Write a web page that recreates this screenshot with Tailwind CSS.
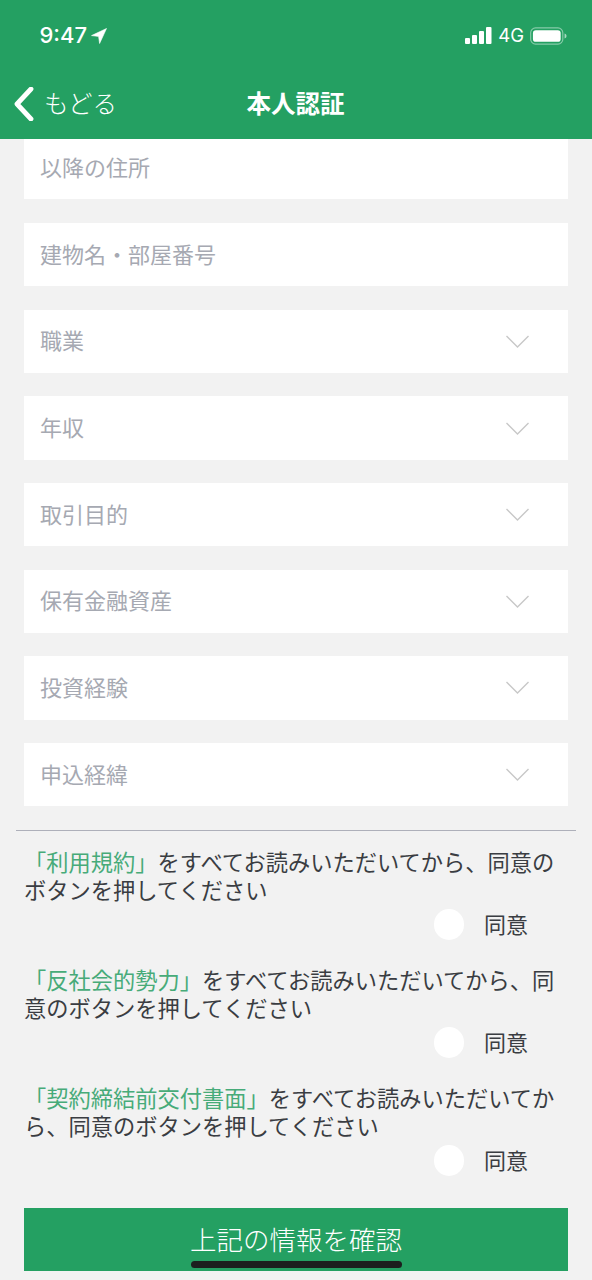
<!DOCTYPE html>
<html lang="ja">
<head>
<meta charset="utf-8">
<script src="https://cdn.jsdelivr.net/npm/@tailwindcss/browser@4"></script>
</head>
<body class="m-0">
<div class="relative w-[592px] h-[1280px] overflow-hidden bg-[#f2f2f2] font-['Noto_Sans_CJK_JP','Noto_Sans',sans-serif]">
  <header class="h-[139px] bg-[#24a062] flex flex-col text-white">
    <div class="h-[71px] flex items-start justify-between pt-[22px] pl-[39.5px] pr-[25px]">
      <div class="flex items-center gap-[4px] h-[27px]">
        <span class="font-['Inter',sans-serif] text-[22px] font-medium leading-[27px]">9:47</span>
        <svg width="16" height="16" viewBox="0 0 16 16"><path d="M15.5 0.5 L0.5 7.6 L7.6 8.4 L8.6 15.5 Z" fill="#fff" stroke="#fff" stroke-width="0.6" stroke-linejoin="round"/></svg>
      </div>
      <div class="flex items-center h-[27px]">
        <svg width="27" height="17" viewBox="0 0 27 17" fill="#fff"><rect x="0" y="11" width="5" height="6" rx="1"/><rect x="7" y="8" width="5" height="9" rx="1"/><rect x="14" y="4" width="5" height="13" rx="1"/><rect x="21" y="0" width="5.5" height="17" rx="1"/></svg>
        <span class="font-['Inter',sans-serif] text-[18.5px] leading-[27px] ml-[6px]">4G</span>
        <svg class="ml-[6px]" width="37" height="18" viewBox="0 0 38 18"><rect x="0.7" y="0.7" width="33" height="16.6" rx="5" fill="none" stroke="#fff" stroke-opacity="0.45" stroke-width="1.2"/><rect x="3" y="3" width="28.5" height="12" rx="3" fill="#fff"/><path d="M35.5 6.5 C37 7 37.5 8 37.5 9 C37.5 10 37 11 35.5 11.5 Z" fill="#fff" fill-opacity="0.6"/></svg>
      </div>
    </div>
    <div class="relative flex-1 flex items-center">
      <svg class="ml-[14px] mt-[-2px]" width="20" height="34" viewBox="0 0 20 34"><path d="M17 2 L3 17 L17 32" fill="none" stroke="#fff" stroke-width="4.8" stroke-linecap="round" stroke-linejoin="round"/></svg>
      <span class="ml-[10px] text-[24.5px] font-light leading-[34px] mt-[-4px]">もどる</span>
      <span class="absolute left-0 right-0 top-[13px] text-center text-[24.5px] font-bold leading-[38px] pr-[1px]">本人認証</span>
    </div>
  </header>

  <main class="px-[24px] flex flex-col gap-[23.35px] text-[22px] text-[#a6a9b2]">
    <div class="h-[60px] mb-[0.55px] bg-white flex items-center px-[16px] pb-[5px]">以降の住所</div>
    <div class="h-[63.55px] bg-white flex items-center px-[16px] pb-[3px]">建物名・部屋番号</div>
    <div class="h-[63.3px] bg-white flex items-center justify-between pl-[16px] pr-[39px]"><span class="mb-[3px]">職業</span><svg width="23" height="13" viewBox="0 0 23 13"><path d="M0.5 1 L11.5 12 L22.5 1" fill="none" stroke="#c8c8c8" stroke-width="1.4"/></svg></div>
    <div class="h-[63.3px] bg-white flex items-center justify-between pl-[16px] pr-[39px]"><span class="mb-[3px]">年収</span><svg width="23" height="13" viewBox="0 0 23 13"><path d="M0.5 1 L11.5 12 L22.5 1" fill="none" stroke="#c8c8c8" stroke-width="1.4"/></svg></div>
    <div class="h-[63.3px] bg-white flex items-center justify-between pl-[16px] pr-[39px]"><span class="mb-[3px]">取引目的</span><svg width="23" height="13" viewBox="0 0 23 13"><path d="M0.5 1 L11.5 12 L22.5 1" fill="none" stroke="#c8c8c8" stroke-width="1.4"/></svg></div>
    <div class="h-[63.3px] bg-white flex items-center justify-between pl-[16px] pr-[39px]"><span class="mb-[3px]">保有金融資産</span><svg width="23" height="13" viewBox="0 0 23 13"><path d="M0.5 1 L11.5 12 L22.5 1" fill="none" stroke="#c8c8c8" stroke-width="1.4"/></svg></div>
    <div class="h-[63.3px] bg-white flex items-center justify-between pl-[16px] pr-[39px]"><span class="mb-[3px]">投資経験</span><svg width="23" height="13" viewBox="0 0 23 13"><path d="M0.5 1 L11.5 12 L22.5 1" fill="none" stroke="#c8c8c8" stroke-width="1.4"/></svg></div>
    <div class="h-[63.3px] bg-white flex items-center justify-between pl-[16px] pr-[39px]"><span class="mb-[3px]">申込経緯</span><svg width="23" height="13" viewBox="0 0 23 13"><path d="M0.5 1 L11.5 12 L22.5 1" fill="none" stroke="#c8c8c8" stroke-width="1.4"/></svg></div>
  </main>

  <div class="mx-[16px] mt-[23.65px] h-px bg-[#aeb0ba]"></div>

  <section class="px-[24px] pt-[16px] text-[22.25px] leading-[28px] text-[#3a3d42]">
    <div class="h-[118px]">
      <p class="m-0"><span class="text-[#47ab79]">「利用規約」</span>をすべてお読みいただいてから、同意のボタンを押してください</p>
      <div class="flex items-center h-[40px] pl-[410px]">
        <span class="w-[30px] h-[31px] rounded-full bg-white mt-[4px]"></span><span class="ml-[20px] text-[22px]">同意</span>
      </div>
    </div>
    <div class="h-[118px]">
      <p class="m-0"><span class="text-[#47ab79]">「反社会的勢力」</span>をすべてお読みいただいてから、同意のボタンを押してください</p>
      <div class="flex items-center h-[40px] pl-[410px]">
        <span class="w-[30px] h-[31px] rounded-full bg-white mt-[4px]"></span><span class="ml-[20px] text-[22px]">同意</span>
      </div>
    </div>
    <div class="h-[118px]">
      <p class="m-0"><span class="text-[#47ab79]">「契約締結前交付書面」</span>をすべてお読みいただいてから、同意のボタンを押してください</p>
      <div class="flex items-center h-[40px] pl-[410px]">
        <span class="w-[30px] h-[31px] rounded-full bg-white mt-[4px]"></span><span class="ml-[20px] text-[22px]">同意</span>
      </div>
    </div>
  </section>

  <div class="absolute left-[24px] top-[1208px] w-[544px] h-[63px] bg-[#24a062] flex items-center justify-center text-white font-light text-[26.5px] pb-[2px]">上記の情報を確認</div>
  <div class="absolute left-[191px] top-[1261px] w-[211px] h-[7px] rounded-full bg-[#1c1f1e]"></div>
</div>
</body>
</html>
